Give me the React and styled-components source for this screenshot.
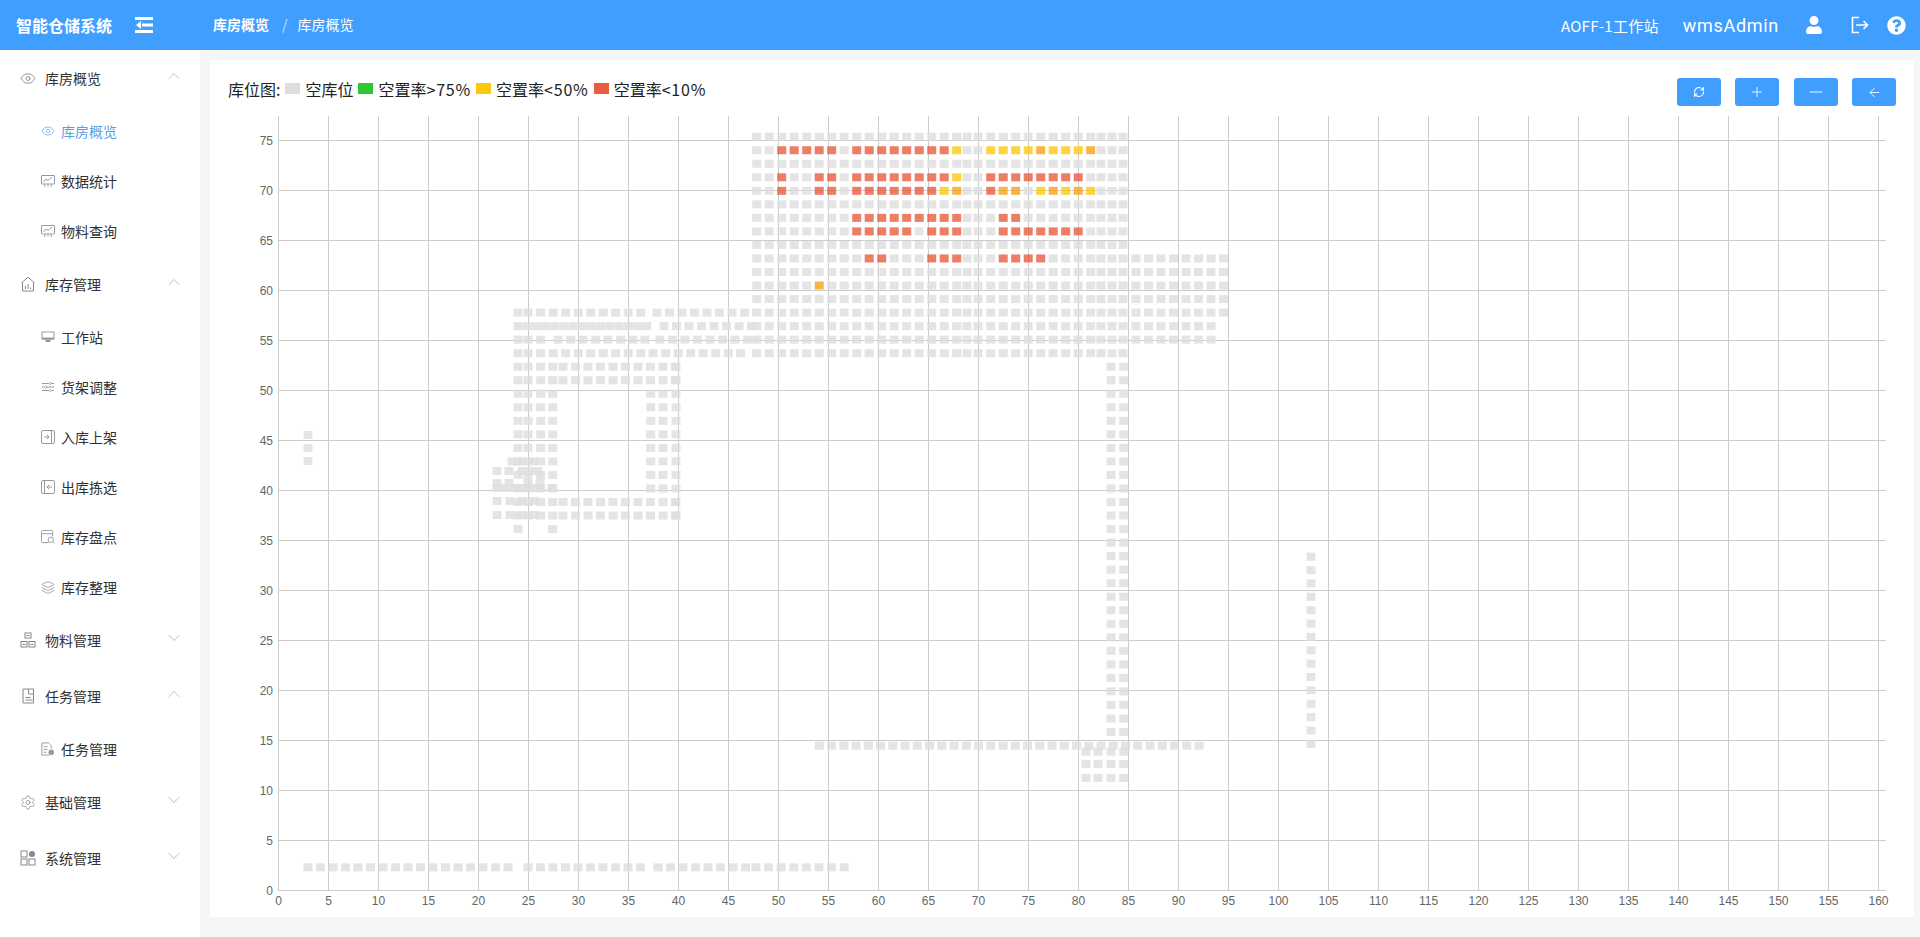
import React from "react";
import styled, { createGlobalStyle } from "styled-components";
import { ChevronDown, ChevronUp, Eye, Layers, Settings, RefreshCw, Plus, Minus, ArrowLeft } from "lucide-react";
import { FaUser, FaQuestionCircle } from "react-icons/fa";

const GlobalStyle = createGlobalStyle`
  html, body {
    margin: 0;
    height: 100%;
    overflow: hidden;
    background: #f5f6f7;
    font-family: "Noto Sans CJK SC", "Liberation Sans", sans-serif;
  }
`;

const Page = styled.div`
  width: 1920px;
  height: 937px;
  display: flex;
  flex-direction: column;
`;
const TopBar = styled.header`
  height: 50px;
  flex: none;
  background: #409eff;
  color: #fff;
  display: flex;
  align-items: center;
`;
const Brand = styled.div`
  width: 97px;
  margin-left: 16px;
  font-size: 16px;
  font-weight: 700;
  white-space: nowrap;
`;
const FoldButton = styled.svg`
  width: 18px;
  height: 16px;
  margin-left: 22px;
`;
const Crumbs = styled.div`
  margin-left: 60px;
  display: flex;
  align-items: center;
  font-size: 14px;
  margin-top: -2px;
`;
const Crumb = styled.span`
  font-weight: ${(p) => (p.$strong ? 700 : 400)};
`;
const CrumbSep = styled.span`
  margin: 0 10px 0 13px;
  color: #c6e2ff;
`;
const TopRight = styled.div`
  margin-left: auto;
  display: flex;
  align-items: center;
`;
const Station = styled.span`
  font-size: 15px;
  letter-spacing: 0.3px;
`;
const UserName = styled.span`
  font-family: Roboto, sans-serif;
  font-size: 18px;
  letter-spacing: 0.7px;
  margin-left: 24px;
`;
const TopIcon = styled.span`
  display: flex;
  margin-left: ${(p) => p.$gap}px;
  margin-right: ${(p) => p.$end || 0}px;
`;

const Body = styled.div`
  flex: 1;
  display: flex;
  min-height: 0;
`;
const Sidebar = styled.aside`
  width: 200px;
  flex: none;
  background: #fff;
`;
const MenuRow = styled.div`
  height: 56px;
  display: flex;
  align-items: center;
  padding-left: 20px;
  font-size: 14px;
  color: #303133;
`;
const MenuIcon = styled.span`
  width: 16px;
  height: 16px;
  display: flex;
  align-items: center;
  justify-content: center;
  color: #85888d;
  margin-right: 9px;
`;
const MenuChevron = styled.span`
  display: flex;
  margin-left: auto;
  margin-right: 16px;
  margin-top: -4px;
  color: #aeb0b4;
`;
const SubRow = styled.div`
  height: 50px;
  display: flex;
  align-items: center;
  padding-left: 41px;
  font-size: 14px;
  color: ${(p) => (p.$active ? "#5b9fe3" : "#303133")};
`;
const SubIcon = styled.span`
  width: 14px;
  height: 14px;
  display: flex;
  color: ${(p) => (p.$active ? "#7fb5ea" : "#96999e")};
  margin-right: 6px;
`;

const Content = styled.main`
  flex: 1;
  padding: 10px 6px 20px 10px;
  min-width: 0;
`;
const Card = styled.section`
  height: 100%;
  background: #fff;
  display: flex;
  flex-direction: column;
`;
const Toolbar = styled.div`
  height: 28px;
  flex: none;
  margin-top: 18px;
  padding: 0 18px;
  display: flex;
  align-items: flex-start;
  justify-content: space-between;
`;
const Legend = styled.div`
  display: flex;
  align-items: center;
  font-size: 16px;
  line-height: 22px;
  color: #222;
`;
const Swatch = styled.span`
  width: 15px;
  height: 11px;
  margin: -1px 5px 0 5px;
  background: ${(p) => p.$color};
`;
const Rate = styled.span`
  letter-spacing: 0.8px;
`;
const ButtonGroup = styled.div`
  display: flex;
  gap: 14.5px;
`;
const ToolButton = styled.button`
  width: 44px;
  height: 28px;
  padding: 0;
  border: none;
  border-radius: 3px;
  background: #409eff;
  color: #fff;
  display: flex;
  align-items: center;
  justify-content: center;
`;
const Chart = styled.svg`
  display: block;
  margin-top: 10px;
  flex: none;
`;
const AxisLabel = styled.text`
  font-family: "Liberation Sans", sans-serif;
  font-size: 12px;
  fill: #666;
`;

// small menu icons
const line = { fill: "none", stroke: "currentColor", strokeWidth: 1 };
const BoardIcon = () => (
  <svg viewBox="0 0 14 14" {...line}>
    <rect x="0.5" y="1.5" width="13" height="8.5" rx="0.5" />
    <path d="M2.5 8l2.5-3 2 1.5 4-3.5M4 10.5L3.5 13M10 10.5l.5 2.5M7 10.5V12.5" />
  </svg>
);
const HouseIcon = () => (
  <svg viewBox="0 0 16 16" {...line}>
    <path d="M1.5 7L8 1.2 14.5 7M2.5 6.5v8.5h11V6.5M5.5 13V10M8 13V8M10.5 13v-1.5" />
  </svg>
);
const MonitorIcon = () => (
  <svg viewBox="0 0 14 14">
    <rect x="1" y="2" width="12" height="7" fill="none" stroke="currentColor" />
    <rect x="1" y="7.5" width="12" height="2" fill="currentColor" />
    <rect x="4.5" y="9.5" width="5" height="2.5" fill="currentColor" />
  </svg>
);
const SlidersIcon = () => (
  <svg viewBox="0 0 14 14" {...line}>
    <path d="M1 3.5h7M10 3.5h3M8.5 2l1.5 1.5L8.5 5M1 7h3M6 7h7M4.5 5.5L6 7 4.5 8.5M1 10.5h7M10 10.5h3M8.5 9l1.5 1.5L8.5 12" />
  </svg>
);
const InIcon = () => (
  <svg viewBox="0 0 14 14" {...line}>
    <rect x="0.5" y="0.5" width="13" height="13" rx="1.5" />
    <path d="M10.5 0.5v13M3 7h5M6 5l2 2-2 2" />
  </svg>
);
const OutIcon = () => (
  <svg viewBox="0 0 14 14" {...line}>
    <rect x="0.5" y="0.5" width="13" height="13" rx="1.5" />
    <path d="M3.5 0.5v13M11 7H6M8 5L6 7l2 2" />
  </svg>
);
const StockIcon = () => (
  <svg viewBox="0 0 15 15" {...line}>
    <path d="M8 13.5H1.5a1 1 0 0 1-1-1v-11a1 1 0 0 1 1-1h10a1 1 0 0 1 1 1V7M0.5 4h12" />
    <circle cx="10.5" cy="10.5" r="2.8" />
    <path d="M12.5 12.5l2 2" />
  </svg>
);
const GroupIcon = () => (
  <svg viewBox="0 0 16 16" {...line}>
    <rect x="5" y="1" width="6" height="5" />
    <rect x="1" y="9.5" width="6" height="5.5" />
    <rect x="9" y="9.5" width="6" height="5.5" />
    <path d="M6.5 3.5h3M2.5 12.5h3M10.5 12.5h3" />
  </svg>
);
const TaskIcon = () => (
  <svg viewBox="0 0 16 16" {...line}>
    <path d="M3 1h10.5v14H3zM8.5 1v5h5M5.5 9.5h5M5.5 12h7" />
  </svg>
);
const TaskSubIcon = () => (
  <svg viewBox="0 0 15 15">
    <path d="M9 14H1V1h7l3 3v3M3 5h4M3 8h4M3 11h3" fill="none" stroke="currentColor" />
    <circle cx="11" cy="11" r="3" fill="currentColor" />
  </svg>
);
const GridIcon = () => (
  <svg viewBox="0 0 16 16" {...line}>
    <rect x="1" y="1" width="6" height="6" />
    <rect x="1" y="9" width="6" height="6" />
    <rect x="9" y="9" width="6" height="6" />
    <circle cx="12" cy="4" r="3" fill="currentColor" stroke="none" />
  </svg>
);

const menus = [
  { icon: <Eye size={17} strokeWidth={1.3} />, label: "库房概览", open: true, subs: [
    { icon: <Eye size={14} strokeWidth={1.5} />, label: "库房概览", active: true },
    { icon: <BoardIcon />, label: "数据统计" },
    { icon: <BoardIcon />, label: "物料查询" },
  ] },
  { icon: <HouseIcon />, label: "库存管理", open: true, subs: [
    { icon: <MonitorIcon />, label: "工作站" },
    { icon: <SlidersIcon />, label: "货架调整" },
    { icon: <InIcon />, label: "入库上架" },
    { icon: <OutIcon />, label: "出库拣选" },
    { icon: <StockIcon />, label: "库存盘点" },
    { icon: <Layers size={15} strokeWidth={1.4} />, label: "库存整理" },
  ] },
  { icon: <GroupIcon />, label: "物料管理" },
  { icon: <TaskIcon />, label: "任务管理", open: true, subs: [{ icon: <TaskSubIcon />, label: "任务管理" }] },
  { icon: <Settings size={19} strokeWidth={1.15} />, label: "基础管理" },
  { icon: <GridIcon />, label: "系统管理" },
];

// chart data, all in page pixels (the svg viewBox starts at the card's corner)
const range = (start, n, step = 12.5) => Array.from({ length: n }, (_, i) => start + i * step);
const rowY = (i) => 136.7 + 13.53 * i;

const topCols = [...range(756.7, 17), 967, 978, ...range(990.7, 9), 1101, 1112, 1123];
const bandA = [518, 528, ...range(540.7, 9)];
const bandB = range(657, 8);
const extra = range(1136, 8);
const strip = [1111, 1123.7];
const lower = [518, 528, 540.7, 552.7, ...range(563, 10), 676];
const RED = "#e85c3f";
const YELLOW = "#fdc90f";
const ORANGE = "#f9a116";
const GREY = "#ddd";

const span = (a, b) => Array.from({ length: b - a + 1 }, (_, i) => a + i);
const colored = {
  1: { r: [...span(2, 6), ...span(8, 15)], y: [16, 19, 20, 21, 22, 24, 25, 26], o: [23, 27] },
  3: { r: [2, 5, 6, ...span(8, 15), ...span(19, 26)], y: [16] },
  4: { r: [2, 5, 6, ...span(8, 14), 19], y: [15, 23, 25, 27], o: [16, 20, 21, 24, 26] },
  6: { r: [...span(8, 16), 20, 21] },
  7: { r: [...span(8, 12), 14, 15, 16, ...span(20, 26)] },
  9: { r: [9, 10, 14, 15, 16, 20, 21, 22, 23] },
  11: { o: [5] },
};

const buildCells = () => {
  const cells = [];
  const add = (x, y, color = GREY) => cells.push({ x, y, color });
  for (let r = 0; r <= 16; r++) {
    const map = colored[r] || {};
    topCols.forEach((x, i) => {
      let color = GREY;
      if (map.r && map.r.includes(i)) color = RED;
      if (map.y && map.y.includes(i)) color = YELLOW;
      if (map.o && map.o.includes(i)) color = ORANGE;
      add(x, rowY(r), color);
    });
  }
  for (let r = 9; r <= 13; r++) extra.forEach((x) => add(x, rowY(r)));
  for (let r = 14; r <= 15; r++) extra.slice(0, 7).forEach((x) => add(x, rowY(r)));
  // the long band going left
  bandA.concat(bandB).forEach((x) => add(x, rowY(13)));
  range(518, 15, 9.2).concat(range(664, 8)).forEach((x) => add(x, rowY(14)));
  [518, 528, 540.7, 558, 570.7, 583, 595.7, 608, 620.7, 633, 645].concat(range(660, 8)).forEach((x) => add(x, rowY(15)));
  [518, 528, ...range(540.7, 17)].forEach((x) => add(x, rowY(16)));
  [17, 18, 27, 28].forEach((r) => lower.forEach((x) => add(x, rowY(r))));
  for (let r = 19; r <= 26; r++) [518, 528, 540.7, 552.7, 650.7, 663, 676].forEach((x) => add(x, rowY(r)));
  [512, 522, 533].forEach((x) => add(x, rowY(24)));
  // the small knot on the left of the block
  [497, 509, 522, 530, 538].forEach((x) => add(x, 471));
  [497, 509, 528, 540].forEach((x) => add(x, 483));
  [497, 505, 514, 523, 532, 540, 552].forEach((x) => add(x, 488));
  [497, 510, 522, 534].forEach((x) => add(x, 501));
  [497, 510, 522, 534].forEach((x) => add(x, 515));
  [518, 552.7].forEach((x) => add(x, rowY(29)));
  // vertical strips
  for (let r = 17; r <= 44; r++) strip.forEach((x) => add(x, rowY(r)));
  for (let r = 31; r <= 45; r++) add(1311, 556.7 + 13.37 * (r - 31));
  [435, 448, 461].forEach((y) => add(308, y));
  // horizontal run near value 15 and the block below it
  range(819.3, 32, 12.25).forEach((x) => add(x, 745.7));
  [751.7, 764, 778].forEach((y) => [1086, 1098, 1111, 1123.7].forEach((x) => add(x, y)));
  // bottom row
  range(308, 17).concat(range(528, 10), range(658, 8), range(756, 8, 12.6)).forEach((x) => add(x, 867.3));
  return cells;
};
const cells = buildCells();

const xTicks = Array.from({ length: 33 }, (_, i) => i * 5);
const yTicks = Array.from({ length: 16 }, (_, i) => i * 5);
const xPos = (v) => 278.5 + v * 10;
const yPos = (v) => 890.5 - v * 10;

const StorageChart = () => (
  <Chart width="1704" height="801" viewBox="210 116 1704 801">
    {xTicks.map((v) => (
      <line key={v} x1={xPos(v)} x2={xPos(v)} y1="116" y2="891" stroke="#ccc" />
    ))}
    {yTicks.map((v) => (
      <line key={v} x1="278" x2="1886" y1={yPos(v)} y2={yPos(v)} stroke="#ccc" />
    ))}
    {cells.map((c, i) => (
      <rect key={i} x={c.x - 4.5} y={c.y - 4} width="9" height="8" fill={c.color} fillOpacity="0.8" />
    ))}
    {yTicks.map((v) => (
      <AxisLabel key={v} x="273" y={yPos(v) + 4} textAnchor="end">{v}</AxisLabel>
    ))}
    {xTicks.map((v) => (
      <AxisLabel key={v} x={xPos(v)} y="905" textAnchor="middle">{v}</AxisLabel>
    ))}
  </Chart>
);

const legendItems = [
  { color: "#ddd", label: "空库位" },
  { color: "#2fc832", label: "空置率", rate: ">75%" },
  { color: "#fdc90f", label: "空置率", rate: "<50%" },
  { color: "#e85c3f", label: "空置率", rate: "<10%" },
];

export default function App() {
  return (
    <Page>
      <GlobalStyle />
      <TopBar>
        <Brand>智能仓储系统</Brand>
        <FoldButton viewBox="0 0 18 16" fill="#fff">
          <path d="M0 0h18v3H0zM0 13h18v3H0zM7 6.5h11v3H7zM6 4L1 8l5 4z" />
        </FoldButton>
        <Crumbs>
          <Crumb $strong>库房概览</Crumb>
          <CrumbSep>/</CrumbSep>
          <Crumb>库房概览</Crumb>
        </Crumbs>
        <TopRight>
          <Station>AOFF-1工作站</Station>
          <UserName>wmsAdmin</UserName>
          <TopIcon $gap={26}><FaUser size={18} /></TopIcon>
          <TopIcon $gap={28}>
            <svg width="18" height="18" viewBox="0 0 18 18" fill="none" stroke="#fff" strokeWidth="1.6">
              <path d="M8 1.5H1.5v15H8M5 9h11M12.5 5l4 4-4 4" />
            </svg>
          </TopIcon>
          <TopIcon $gap={18} $end={14}><FaQuestionCircle size={19} /></TopIcon>
        </TopRight>
      </TopBar>
      <Body>
        <Sidebar>
          {menus.map((m) => (
            <div key={m.label}>
              <MenuRow>
                <MenuIcon>{m.icon}</MenuIcon>
                {m.label}
                <MenuChevron>
                  {m.open ? <ChevronUp size={20} strokeWidth={1} /> : <ChevronDown size={20} strokeWidth={1} />}
                </MenuChevron>
              </MenuRow>
              {m.subs && m.subs.map((s) => (
                <SubRow key={s.label} $active={s.active}>
                  <SubIcon $active={s.active}>{s.icon}</SubIcon>
                  {s.label}
                </SubRow>
              ))}
            </div>
          ))}
        </Sidebar>
        <Content>
          <Card>
            <Toolbar>
              <Legend>
                库位图:
                {legendItems.map((l, i) => (
                  <React.Fragment key={i}>
                    <Swatch $color={l.color} />
                    {l.label}
                    {l.rate && <Rate>{l.rate}</Rate>}
                  </React.Fragment>
                ))}
              </Legend>
              <ButtonGroup>
                <ToolButton><RefreshCw size={12} strokeWidth={2.4} /></ToolButton>
                <ToolButton><Plus size={16} strokeWidth={1.3} /></ToolButton>
                <ToolButton><Minus size={20} strokeWidth={1.1} /></ToolButton>
                <ToolButton><ArrowLeft size={15} strokeWidth={1.4} /></ToolButton>
              </ButtonGroup>
            </Toolbar>
            <StorageChart />
          </Card>
        </Content>
      </Body>
    </Page>
  );
}
